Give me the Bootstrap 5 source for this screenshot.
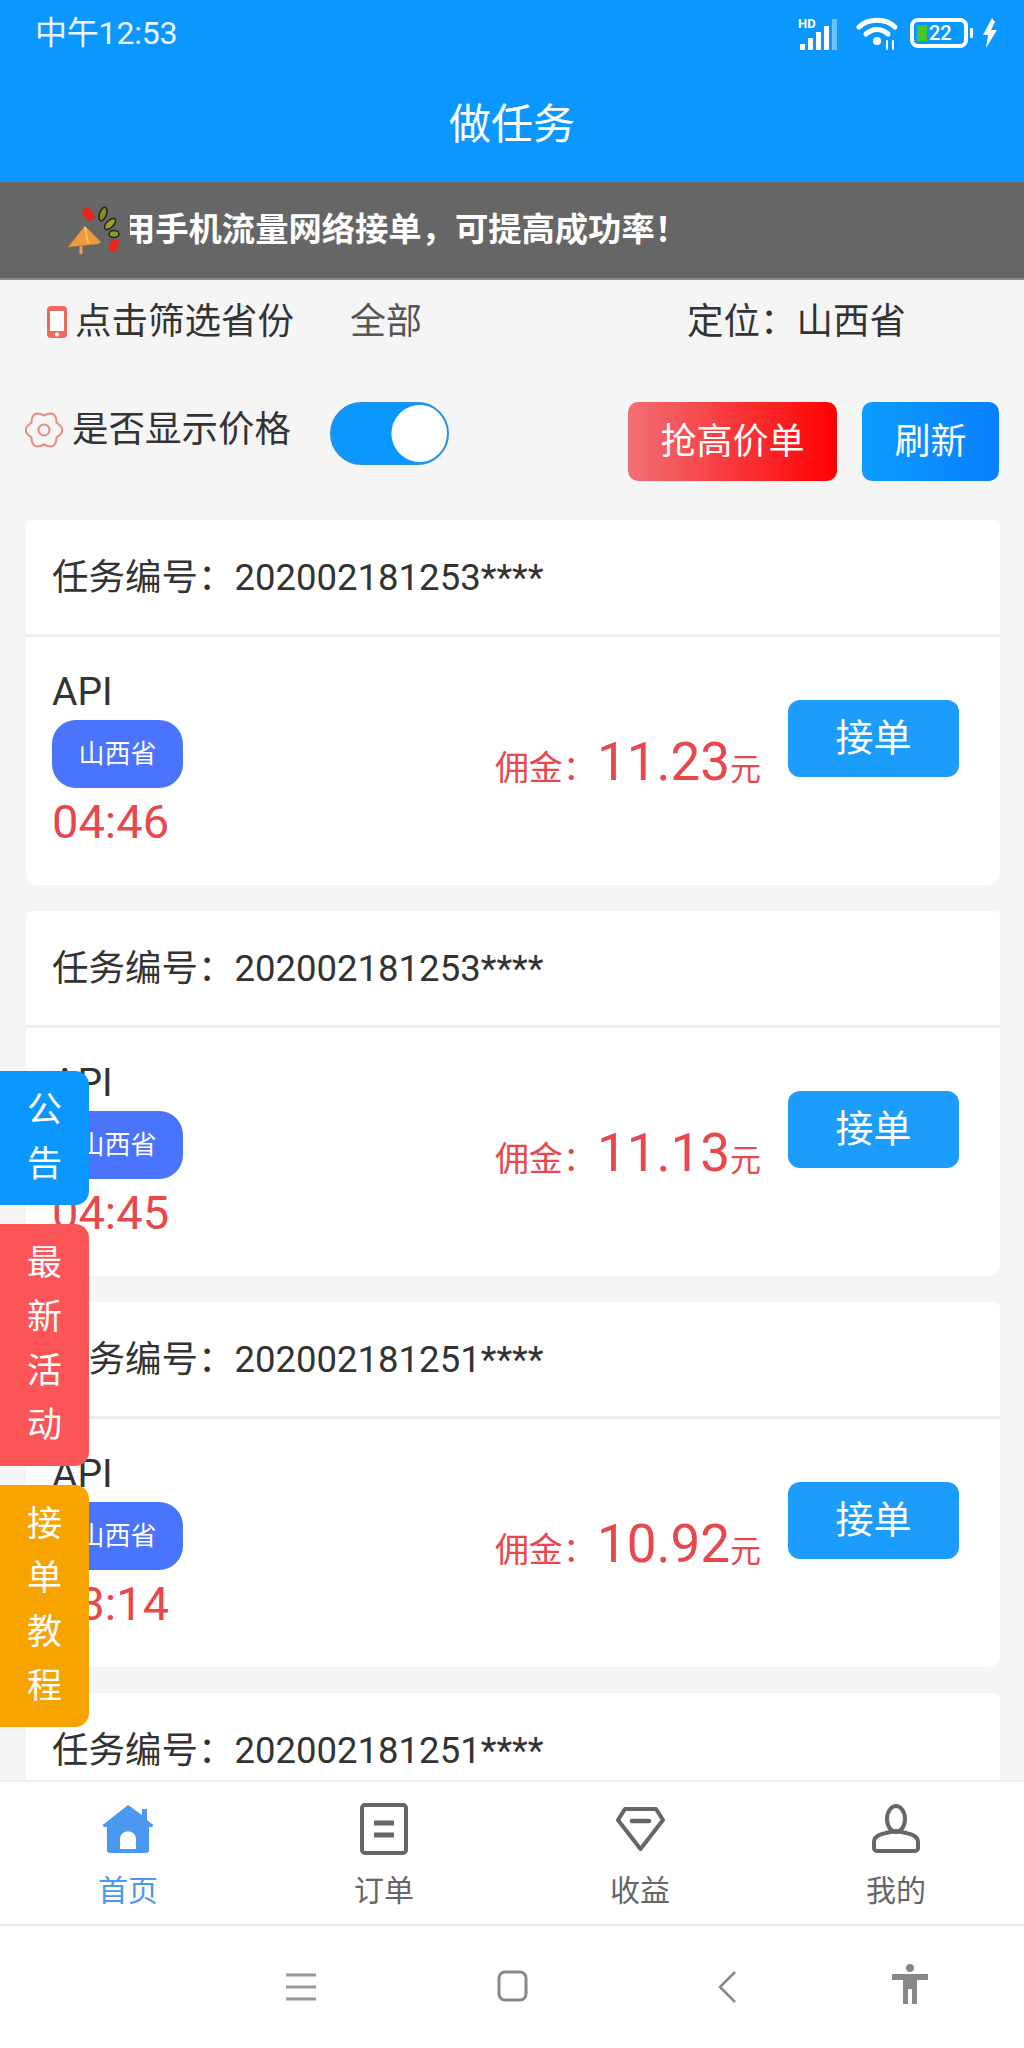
<!DOCTYPE html>
<html lang="zh-CN">
<head>
    <meta charset="UTF-8">
    <meta name="viewport" content="width=device-width, initial-scale=1.0">
    <title>做任务</title>
    <link href="https://cdn.jsdelivr.net/npm/bootstrap@5.3.0/dist/css/bootstrap.min.css" rel="stylesheet">
    <style>
        html, body { margin: 0; height: 2048px; overflow: hidden; }
        body { font-family: Roboto, "Noto Sans CJK SC", sans-serif; background: #f5f5f5; color: #333; }
        .app-shell { height: 2048px; position: relative; overflow: hidden; }

        /* top */
        .top-blue { background: #0a98ff; height: 182px; color: #fff; }
        .status-row { height: 62px; padding: 3px 26px 0 35px; font-size: 32px; }
        .status-time { opacity: .92; letter-spacing: -.2px; }
        .batt-gap { margin-left: 12px; }
        .page-title { font-size: 42px; line-height: 120px; height: 120px; padding-top: 3px; }
        .notice-bar { height: 98px; background: #666; color: #fff; font-size: 33.3px; font-weight: 700; padding-left: 68px; border-bottom: 2px solid #8a8a8a; }
        .notice-clip { width: 558px; overflow: hidden; white-space: nowrap; direction: rtl; margin-left: 10px; }

        /* filters */
        .filter-row { height: 84px; font-size: 36px; padding-left: 46px; }
        .filter-name { margin-left: 7px; font-size: 36.5px; }
        .filter-all { margin-left: 56px; color: #555; }
        .filter-loc { margin-left: 265px; font-size: 36.5px; }
        .switch-row { height: 79px; margin-top: 38px; padding: 0 25px 0 25px; font-size: 36.5px; }
        .switch-gear { margin-top: -24px; }
        .switch-label { margin-left: 9px; margin-top: -22px; }
        .price-switch-wrap { margin-left: 39px; margin-top: -16px; }
        .form-switch .form-check-input.price-switch,
        .form-switch .form-check-input.price-switch:checked {
            width: 119px; height: 63px; border: 2px solid #2a90e0; border-radius: 32px;
            background-color: #0a98ff; background-size: auto; background-position: 0 0;
            background-image: radial-gradient(circle 29px at 88px 50%, #fff 28px, transparent 29px);
        }
        .btn-rush, .btn-refresh {
            height: 79px; color: #fff; border: 0; border-radius: 10px; padding: 0;
        }
        .btn-rush { width: 209px; font-size: 36px; background: linear-gradient(to right, #f07075, #ff0000); }
        .btn-refresh { width: 137px; margin-left: 25px; font-size: 36px; background: linear-gradient(to right, #0a9dff, #0a7fff); }

        /* task cards */
        .task-list { padding: 39px 24px 0 26px; }
        .task-card { height: 365px; margin-bottom: 26px; border: 0; border-radius: 12px; background: #fff; }
        .task-card .card-header {
            height: 117px; padding: 0 26px; font-size: 36.5px; line-height: 116px;
            background: #fff; border-bottom: 3px solid #eee; color: #333;
        }
        .task-card .card-body { padding: 33px 41px 0 26px; }
        .task-name { font-size: 39px; line-height: 44px; }
        .area-tag { width: 131px; height: 68px; margin-top: 6px; border-radius: 24px; background: #4a74fb; color: #fff; font-size: 26px; }
        .count-down { color: #e8484b; font-size: 47px; line-height: 54px; margin-top: 7px; }
        .price-box { color: #e8484b; font-size: 34px; line-height: 60px; margin-top: 62px; margin-right: 27px; }
        .price-num { font-size: 53px; }
        .price-unit { font-size: 31px; }
        .btn-take { width: 171px; height: 77px; margin-top: 30px; background: #1c9cfb; color: #fff; border: 0; border-radius: 12px; font-size: 38px; padding: 0; }

        /* floating side tabs */
        .side-tabs { position: absolute; left: 0; top: 1071px; width: 89px; gap: 19px; }
        .side-tab { color: #fff; font-size: 35px; line-height: 54px; text-align: center; padding: 13px 0; border-radius: 0 14px 14px 0; }
        .tab-blue { background: #0a98ff; }
        .tab-red { background: #fb5558; }
        .tab-orange { background: #f8a400; }

        /* bottom */
        .tab-bar { position: absolute; left: 0; right: 0; top: 1780px; height: 146px; background: #fff; border-top: 2px solid #efefef; border-bottom: 2px solid #e6e6e6; }
        .tab-item { width: 256px; color: #666; font-size: 30px; line-height: 40px; padding-top: 21px; }
        .tab-item.on { color: #4a98f0; }
        .tab-item svg { display: block; margin: 0 auto 16px; }
        .sys-bar { position: absolute; left: 0; right: 0; top: 1926px; height: 122px; background: #fff; }
        .sys-bar svg { position: absolute; }
    </style>
</head>
<body>
<div class="app-shell">
    <div class="top-blue">
        <div class="status-row d-flex align-items-center justify-content-between">
            <span class="status-time">中午12:53</span>
            <div class="d-flex align-items-center">
                <svg width="42" height="36" viewBox="0 -2 42 36">
                    <text x="0" y="11" font-family="Roboto" font-size="13" font-weight="700" fill="#fff">HD</text>
                    <rect x="2" y="27" width="5" height="6" fill="#fff"/>
                    <rect x="10" y="21" width="5" height="12" fill="#fff"/>
                    <rect x="18" y="15" width="5" height="18" fill="#fff"/>
                    <rect x="26" y="9" width="5" height="24" fill="#fff"/>
                    <rect x="34" y="2" width="5" height="31" fill="#fff" opacity=".4"/>
                </svg>
                <svg class="ms-3" width="42" height="34" viewBox="0 0 42 34" fill="none" stroke="#fff" stroke-width="5" stroke-linecap="round">
                    <path d="M3 11C12 2 30 2 39 11"/>
                    <path d="M10 18c7-6 15-6 22 0"/>
                    <circle cx="21" cy="25" r="4" fill="#fff" stroke="none"/>
                    <path d="M31 25v8M37 25v8" stroke-width="2"/>
                </svg>
                <div class="batt-gap d-flex align-items-center">
                    <svg width="68" height="30" viewBox="0 0 68 30">
                        <rect x="2" y="2" width="54" height="26" rx="6" fill="none" stroke="#fff" stroke-width="4"/>
                        <rect x="7" y="7" width="10" height="16" fill="#4cc42c"/>
                        <text x="19" y="22" font-family="Roboto" font-size="20" font-weight="500" fill="#fff">22</text>
                        <rect x="60" y="10" width="3" height="10" rx="1" fill="#fff"/>
                    </svg>
                </div>
                <svg class="ms-1" width="16" height="30" viewBox="0 0 16 30"><path d="M10 0L1 17h5l-2 13 11-18H9l4-8z" fill="#fff"/></svg>
            </div>
        </div>
        <div class="page-title text-center">做任务</div>
    </div>

    <div class="notice-bar d-flex align-items-center">
        <svg width="52" height="50" viewBox="0 0 52 50">
            <path d="M17 21L33 37 30 39 0 42z" fill="#ec9a3e"/>
            <path d="M13 41v8" stroke="#e8a050" stroke-width="3"/>
            <path d="M17 22l3 16" stroke="#f6c070" stroke-width="2"/>
            <rect x="16" y="3" width="9" height="13" rx="2" fill="#e8241c" transform="rotate(-35 20 10)"/>
            <ellipse cx="35" cy="9" rx="3.5" ry="7" fill="#8a8a20" stroke="#222" stroke-width="1.5" transform="rotate(20 35 9)"/>
            <ellipse cx="42" cy="19" rx="3.5" ry="7" fill="#a0a020" stroke="#222" stroke-width="1.5" transform="rotate(45 42 19)"/>
            <ellipse cx="46" cy="29" rx="5" ry="3.5" fill="#8a9a30" stroke="#222" stroke-width="1.5"/>
            <rect x="42" y="34" width="8" height="13" rx="2" fill="#e8241c" transform="rotate(15 46 40)"/>
        </svg>
        <div class="notice-clip"><bdi>用手机流量网络接单，可提高成功率！</bdi></div>
    </div>

    <div class="filter-row d-flex align-items-center">
        <svg width="22" height="34" viewBox="0 0 22 34"><rect x="1" y="1" width="20" height="32" rx="4" fill="#ee6a5e"/><rect x="4" y="6" width="14" height="20" fill="#fff"/><circle cx="11" cy="29.5" r="2" fill="#fff"/></svg>
        <span class="filter-name">点击筛选省份</span>
        <span class="filter-all">全部</span>
        <span class="filter-loc">定位：山西省</span>
    </div>

    <div class="switch-row d-flex align-items-center">
        <svg class="switch-gear" width="38" height="36" viewBox="0 0 38 36" fill="none" stroke="#e98a80" stroke-width="2">
            <path d="M31.6 10.75Q43 18 31.6 25.25Q31 38.8 19 32.5Q7 38.8 6.4 25.25Q-5 18 6.4 10.75Q7-2.8 19 3.5Q31-2.8 31.6 10.75Z"/>
            <circle cx="19" cy="18" r="5.5"/>
        </svg>
        <span class="switch-label">是否显示价格</span>
        <div class="form-check form-switch mb-0 p-0 d-flex price-switch-wrap">
            <input class="form-check-input price-switch m-0" type="checkbox" role="switch" checked>
        </div>
        <button class="btn btn-rush ms-auto">抢高价单</button>
        <button class="btn btn-refresh">刷新</button>
    </div>

    <div class="task-list">
        <div class="card task-card">
            <div class="card-header">任务编号：202002181253****</div>
            <div class="card-body d-flex align-items-start">
                <div>
                    <div class="task-name">API</div>
                    <div class="area-tag d-flex align-items-center justify-content-center">山西省</div>
                    <div class="count-down">04:46</div>
                </div>
                <div class="price-box ms-auto">佣金：<span class="price-num">11.23</span><span class="price-unit">元</span></div>
                <button class="btn btn-take">接单</button>
            </div>
        </div>
        <div class="card task-card">
            <div class="card-header">任务编号：202002181253****</div>
            <div class="card-body d-flex align-items-start">
                <div>
                    <div class="task-name">API</div>
                    <div class="area-tag d-flex align-items-center justify-content-center">山西省</div>
                    <div class="count-down">04:45</div>
                </div>
                <div class="price-box ms-auto">佣金：<span class="price-num">11.13</span><span class="price-unit">元</span></div>
                <button class="btn btn-take">接单</button>
            </div>
        </div>
        <div class="card task-card">
            <div class="card-header">任务编号：202002181251****</div>
            <div class="card-body d-flex align-items-start">
                <div>
                    <div class="task-name">API</div>
                    <div class="area-tag d-flex align-items-center justify-content-center">山西省</div>
                    <div class="count-down">03:14</div>
                </div>
                <div class="price-box ms-auto">佣金：<span class="price-num">10.92</span><span class="price-unit">元</span></div>
                <button class="btn btn-take">接单</button>
            </div>
        </div>
        <div class="card task-card">
            <div class="card-header">任务编号：202002181251****</div>
        </div>
    </div>

    <!-- floating side tabs -->
    <div class="side-tabs d-flex flex-column">
        <div class="side-tab tab-blue">公<br>告</div>
        <div class="side-tab tab-red">最<br>新<br>活<br>动</div>
        <div class="side-tab tab-orange">接<br>单<br>教<br>程</div>
    </div>

    <div class="tab-bar d-flex">
        <div class="tab-item on text-center">
            <svg width="50" height="52" viewBox="0 -2 50 52"><path d="M25 0L39 10V4h5v11l5 4a1.5 1.5 0 0 1-1 3h-2v23a3 3 0 0 1-3 3H7a3 3 0 0 1-3-3V22H2a1.5 1.5 0 0 1-1-3z" fill="#4a98f0"/><path d="M17 44V34c0-10 16-10 16 0v10z" fill="#fff"/></svg>
            首页
        </div>
        <div class="tab-item text-center">
            <svg width="48" height="52" viewBox="0 0 48 52" fill="none" stroke="#666" stroke-width="4"><rect x="2" y="2" width="44" height="48" rx="3"/><path d="M14 20h20M14 32h20" stroke-width="5"/></svg>
            订单
        </div>
        <div class="tab-item text-center">
            <svg width="49" height="52" viewBox="0 -4 49 52" fill="none" stroke="#666" stroke-width="4" stroke-linejoin="round"><path d="M9 2H40L47 13 24.5 42 2 13Z"/><path d="M16 14h17" stroke-width="4.5" stroke-linecap="round"/></svg>
            收益
        </div>
        <div class="tab-item text-center">
            <svg width="48" height="52" viewBox="0 -1 48 52" fill="none" stroke="#666" stroke-width="4"><ellipse cx="24" cy="15" rx="9" ry="13"/><path d="M2 38C2 30 14 29 24 27 34 29 46 30 46 38V44a3 3 0 0 1-3 3H5a3 3 0 0 1-3-3Z"/></svg>
            我的
        </div>
    </div>

    <div class="sys-bar">
        <svg style="left:286px;top:47px" width="30" height="28" viewBox="0 0 30 28" stroke="#999" stroke-width="3"><path d="M0 2h30M0 14h30M0 26h30"/></svg>
        <svg style="left:497px;top:44px" width="31" height="32" viewBox="0 0 31 32" fill="none" stroke="#888" stroke-width="3"><rect x="2" y="2" width="27" height="28" rx="6"/></svg>
        <svg style="left:718px;top:45px" width="18" height="32" viewBox="0 0 18 32" fill="none" stroke="#888" stroke-width="2.5"><path d="M17 1L2 16l15 15"/></svg>
        <svg style="left:892px;top:38px" width="36" height="40" viewBox="0 0 36 40" fill="#888"><circle cx="18" cy="4" r="4"/><path d="M0 10h36v6H25v24h-5V25h-4v15h-5V16H0z"/></svg>
    </div>
</div>
<script src="https://cdn.jsdelivr.net/npm/bootstrap@5.3.0/dist/js/bootstrap.bundle.min.js"></script>
</body>
</html>
